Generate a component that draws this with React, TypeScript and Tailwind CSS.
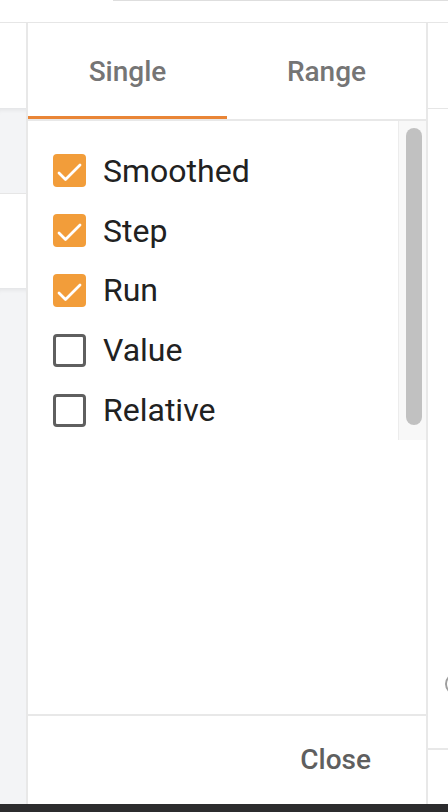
import { useState } from 'react'

const OPTIONS = [
  { label: 'Smoothed', on: true },
  { label: 'Step', on: true },
  { label: 'Run', on: true },
  { label: 'Value', on: false },
  { label: 'Relative', on: false },
]

function Checkbox({ checked }: { checked: boolean }) {
  if (checked) {
    return (
      <span className="flex h-[33px] w-[33px] shrink-0 items-center justify-center rounded-[4px] bg-[#f29d3a]">
        <svg width="33" height="33" viewBox="0 0 33 33" fill="none">
          <polyline points="6,19 12.5,25.5 27,11" stroke="white" strokeWidth="2.8" strokeLinecap="round" strokeLinejoin="round" />
        </svg>
      </span>
    )
  }
  return <span className="h-[33px] w-[33px] shrink-0 rounded-[4px] border-[3.5px] border-[#5f5f5f] bg-white" />
}

export default function App() {
  const [tab, setTab] = useState<'single' | 'range'>('single')
  const [opts, setOpts] = useState(OPTIONS)

  return (
    <div className="flex h-[812px] w-[448px] flex-col overflow-hidden bg-white font-['Roboto',sans-serif]">
      {/* top strip */}
      <div className="flex h-[23px] shrink-0 border-b border-[#e6e6e6]">
        <div className="w-[113px]" />
        <div className="h-px flex-1 bg-[#dedede]" />
      </div>

      <div className="flex min-h-0 flex-1">
        {/* left background column */}
        <div className="flex w-[26px] shrink-0 flex-col">
          <div className="h-[85px] bg-white" />
          <div className="h-[86px] border-b border-[#e6e6e6] bg-[#f3f4f6] shadow-[inset_0_5px_4px_-3px_rgba(0,0,0,0.07)]" />
          <div className="h-[94px] bg-white" />
          <div className="flex-1 bg-[#f3f4f6] shadow-[inset_0_5px_4px_-3px_rgba(0,0,0,0.07)]" />
        </div>

        {/* panel */}
        <div className="flex w-[402px] shrink-0 flex-col border-x-2 border-[#e8e8e8] bg-white">
          <div className="flex h-[96px] shrink-0">
            {(['single', 'range'] as const).map((t) => (
              <button
                key={t}
                onClick={() => setTab(t)}
                className={`flex flex-1 items-center justify-center border-b-[3px] pt-[5px] text-[28px] font-medium text-[#757575] ${tab === t ? 'border-[#e98536]' : 'border-transparent'}`}
              >
                {t === 'single' ? 'Single' : 'Range'}
              </button>
            ))}
          </div>
          <div className="h-[2px] shrink-0 bg-[#e8e8e8]" />

          <div className="flex h-[319px] shrink-0">
            <div className="flex flex-1 flex-col pt-[20px] pl-[25px]">
              {opts.map((o, i) => (
                <label
                  key={o.label}
                  className="flex h-[60px] cursor-pointer items-center gap-[17px]"
                  onClick={() => setOpts((prev) => prev.map((p, j) => (j === i ? { ...p, on: !p.on } : p)))}
                >
                  <Checkbox checked={o.on} />
                  <span className="text-[32px] leading-none text-[#212121]">{o.label}</span>
                </label>
              ))}
            </div>
            {/* scrollbar */}
            <div className="w-[28px] shrink-0 border-l border-[#ececec] bg-[#f8f8f8] pt-[7px] pl-[7px]">
              <div className="h-[297px] w-[16px] rounded-full bg-[#c1c1c1]" />
            </div>
          </div>

          <div className="flex-1" />

          <div className="flex h-[90px] shrink-0 items-center justify-end border-t-2 border-[#e8e8e8] pr-[55px]">
            <button className="text-[28px] font-medium text-[#5f5f5f]">Close</button>
          </div>
        </div>

        {/* right background column */}
        <div className="flex flex-1 flex-col overflow-hidden">
          <div className="h-[86px] border-b border-[#e6e6e6] bg-white" />
          <div className="flex flex-1 items-end bg-white pb-[53px] pl-[17px]">
            <div className="h-[22px] w-[22px] shrink-0 rounded-full border-2 border-[#9e9e9e]" />
          </div>
          <div className="h-[56px] border-t-2 border-[#e8e8e8] bg-white" />
        </div>
      </div>

      <div className="h-[8px] shrink-0 bg-[#2c2c2e]" />
    </div>
  )
}
